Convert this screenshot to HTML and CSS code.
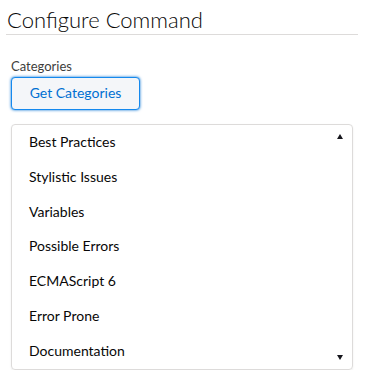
FILE: index.html
```html
<!DOCTYPE html>
<html lang="en">
<head>
  <meta charset="UTF-8" />
  <title>Configure Command</title>
  <link rel="stylesheet" href="styles.css">
</head>
<body>
  <div class="panel">
    <h1 class="panel-title">Configure Command</h1>

    <div class="field">
      <label class="field-label">Categories</label>
      <button class="fetch-btn">Get Categories</button>
    </div>

    <div class="listbox">
      <div class="option">Best Practices</div>
      <div class="option">Stylistic Issues</div>
      <div class="option">Variables</div>
      <div class="option">Possible Errors</div>
      <div class="option">ECMAScript 6</div>
      <div class="option">Error Prone</div>
      <div class="option">Documentation</div>
      <span class="scroll-arrow up"></span>
      <span class="scroll-arrow down"></span>
    </div>
  </div>
</body>
</html>
```

FILE: styles.css
```css
* {
  box-sizing: border-box;
}

body {
  margin: 0;
  font-family: Lato, 'Liberation Sans', sans-serif;
  color: #3e3e3c;
  background: #fff;
}

.panel {
  padding: 6px 8px 0 6px;
}

.panel-title {
  margin: 0;
  padding: 0 0 1px 1px;
  font-size: 22px;
  font-weight: 300;
  line-height: 27px;
  color: #080707;
  border-bottom: 1px solid #dddbda;
}

.field {
  display: flex;
  flex-direction: column;
  align-items: flex-start;
  padding: 23px 0 0 5px;
}

.field-label {
  font-size: 13px;
  line-height: 16px;
  margin-bottom: 3px;
}

.fetch-btn {
  font-family: inherit;
  font-size: 14px;
  color: #0070d2;
  background: #f4f6f9;
  border: 1px solid #1589ee;
  border-radius: 4px;
  padding: 0 0 2px;
  height: 33px;
  width: 129px;
  white-space: nowrap;
  box-shadow: 0 0 3px #0070d2;
  cursor: pointer;
}

.listbox {
  position: relative;
  margin: 14px 5px 0 5px;
  border: 1px solid #dddbda;
  border-radius: 4px;
  box-shadow: 0 1px 2px rgba(0, 0, 0, 0.08);
}

.option {
  font-size: 14px;
  line-height: 34.8px;
  padding-left: 17px;
  color: #080707;
}

.scroll-arrow {
  position: absolute;
  right: 9px;
  width: 0;
  height: 0;
  border-left: 3px solid transparent;
  border-right: 3px solid transparent;
}

.scroll-arrow.up {
  top: 9px;
  border-bottom: 5px solid #16161d;
}

.scroll-arrow.down {
  bottom: 9px;
  border-top: 5px solid #16161d;
}
```
